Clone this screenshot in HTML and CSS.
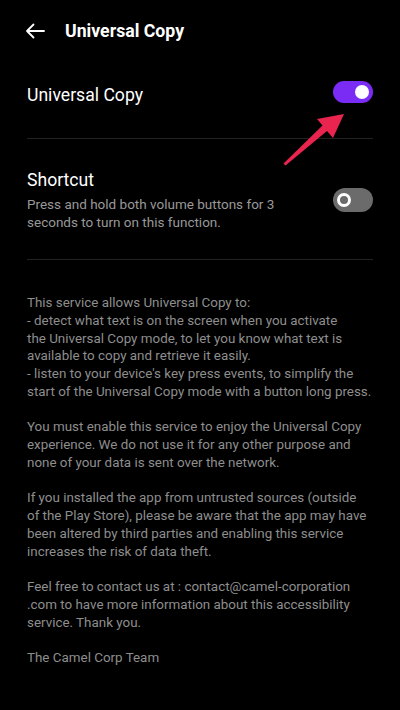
FILE: index.html
```html
<!DOCTYPE html>
<html lang="en">
<head>
    <meta charset="UTF-8">
    <title>Universal Copy</title>
    <link rel="stylesheet" href="styles.css">
</head>

<body>
    <div class="screen">
        <div class="header">
            <svg class="back" width="20" height="16" viewBox="0 0 20 16">
                <path d="M19 8H2M8.5 1.5L2 8l6.5 6.5" fill="none" stroke="#fff" stroke-width="1.8" stroke-linecap="round" stroke-linejoin="round"/>
            </svg>
            <h1>Universal Copy</h1>
        </div>

        <div class="setting first">
            <div class="setting-text">
                <div class="setting-title">Universal Copy</div>
            </div>
            <div class="toggle on"><span class="knob"></span></div>
        </div>

        <div class="setting second">
            <div class="setting-text">
                <div class="setting-title">Shortcut</div>
                <div class="setting-desc">Press and hold both volume buttons for 3<br>seconds to turn on this function.</div>
            </div>
            <div class="toggle off"><span class="knob"></span></div>
        </div>

        <div class="about">
            <p>This service allows Universal Copy to:<br>
            - detect what text is on the screen when you activate<br>
            the Universal Copy mode, to let you know what text is<br>
            available to copy and retrieve it easily.<br>
            - listen to your device's key press events, to simplify the<br>
            start of the Universal Copy mode with a button long press.</p>
            <p>You must enable this service to enjoy the Universal Copy<br>
            experience. We do not use it for any other purpose and<br>
            none of your data is sent over the network.</p>
            <p>If you installed the app from untrusted sources (outside<br>
            of the Play Store), please be aware that the app may have<br>
            been altered by third parties and enabling this service<br>
            increases the risk of data theft.</p>
            <p>Feel free to contact us at : contact@camel-corporation<br>
            .com to have more information about this accessibility<br>
            service. Thank you.</p>
            <p>The Camel Corp Team</p>
        </div>

        <!-- annotation arrow pointing at the toggle -->
        <svg class="pointer" width="400" height="200" viewBox="0 0 400 200">
            <polygon points="283.5,163.5 285.5,165.5 327,131 333,138 344,114 317,119 322.5,125.5" fill="#e8244f"/>
        </svg>
    </div>
</body>
</html>
```

FILE: styles.css
```css
body {
    margin: 0;
    background-color: #000;
    font-family: Roboto, "Noto Sans", sans-serif;
    color: #fff;
}

.screen {
    position: relative;
    width: 400px;
    height: 710px;
    overflow: hidden;
    background-color: #000;
}

.header {
    display: flex;
    align-items: center;
    height: 62px;
    padding: 0 0 0 25px;
    box-sizing: border-box;
}

.back {
    display: block;
    margin-right: 20px;
}

.header h1 {
    margin: 0;
    font-size: 17.7px;
    font-weight: bold;
    color: #fff;
}

.setting {
    display: flex;
    align-items: center;
    justify-content: space-between;
    margin: 0 27px;
    border-bottom: 1px solid #222;
}

.setting.first {
    padding: 21px 0 31px 0;
}

.setting.second {
    padding: 29px 0 28px 0;
}

.setting-title {
    font-size: 17.6px;
    line-height: 24px;
    color: #fff;
}

.setting-desc {
    margin-top: 3px;
    font-size: 13.5px;
    line-height: 18px;
    color: #999;
}

.toggle {
    position: relative;
    width: 40px;
    height: 22px;
    border-radius: 11px;
    flex-shrink: 0;
}

.toggle.on {
    background-color: #7a2cf5;
    margin-top: -6px;
}

.toggle.off {
    background-color: #6b6b6b;
    height: 24px;
    border-radius: 12px;
}

.toggle .knob {
    position: absolute;
    top: 50%;
    width: 14px;
    height: 14px;
    margin-top: -7px;
    border-radius: 50%;
    box-sizing: border-box;
}

.toggle.on .knob {
    right: 4px;
    background-color: #fff;
}

.toggle.off .knob {
    left: 4px;
    border: 3px solid #fff;
}

.about {
    padding: 34px 27px 0 27px;
    font-size: 13.4px;
    line-height: 17.75px;
    color: #8e8e8e;
    white-space: nowrap;
}

.about p {
    margin: 0 0 17.75px 0;
}

.pointer {
    position: absolute;
    top: 0;
    left: 0;
}
```
